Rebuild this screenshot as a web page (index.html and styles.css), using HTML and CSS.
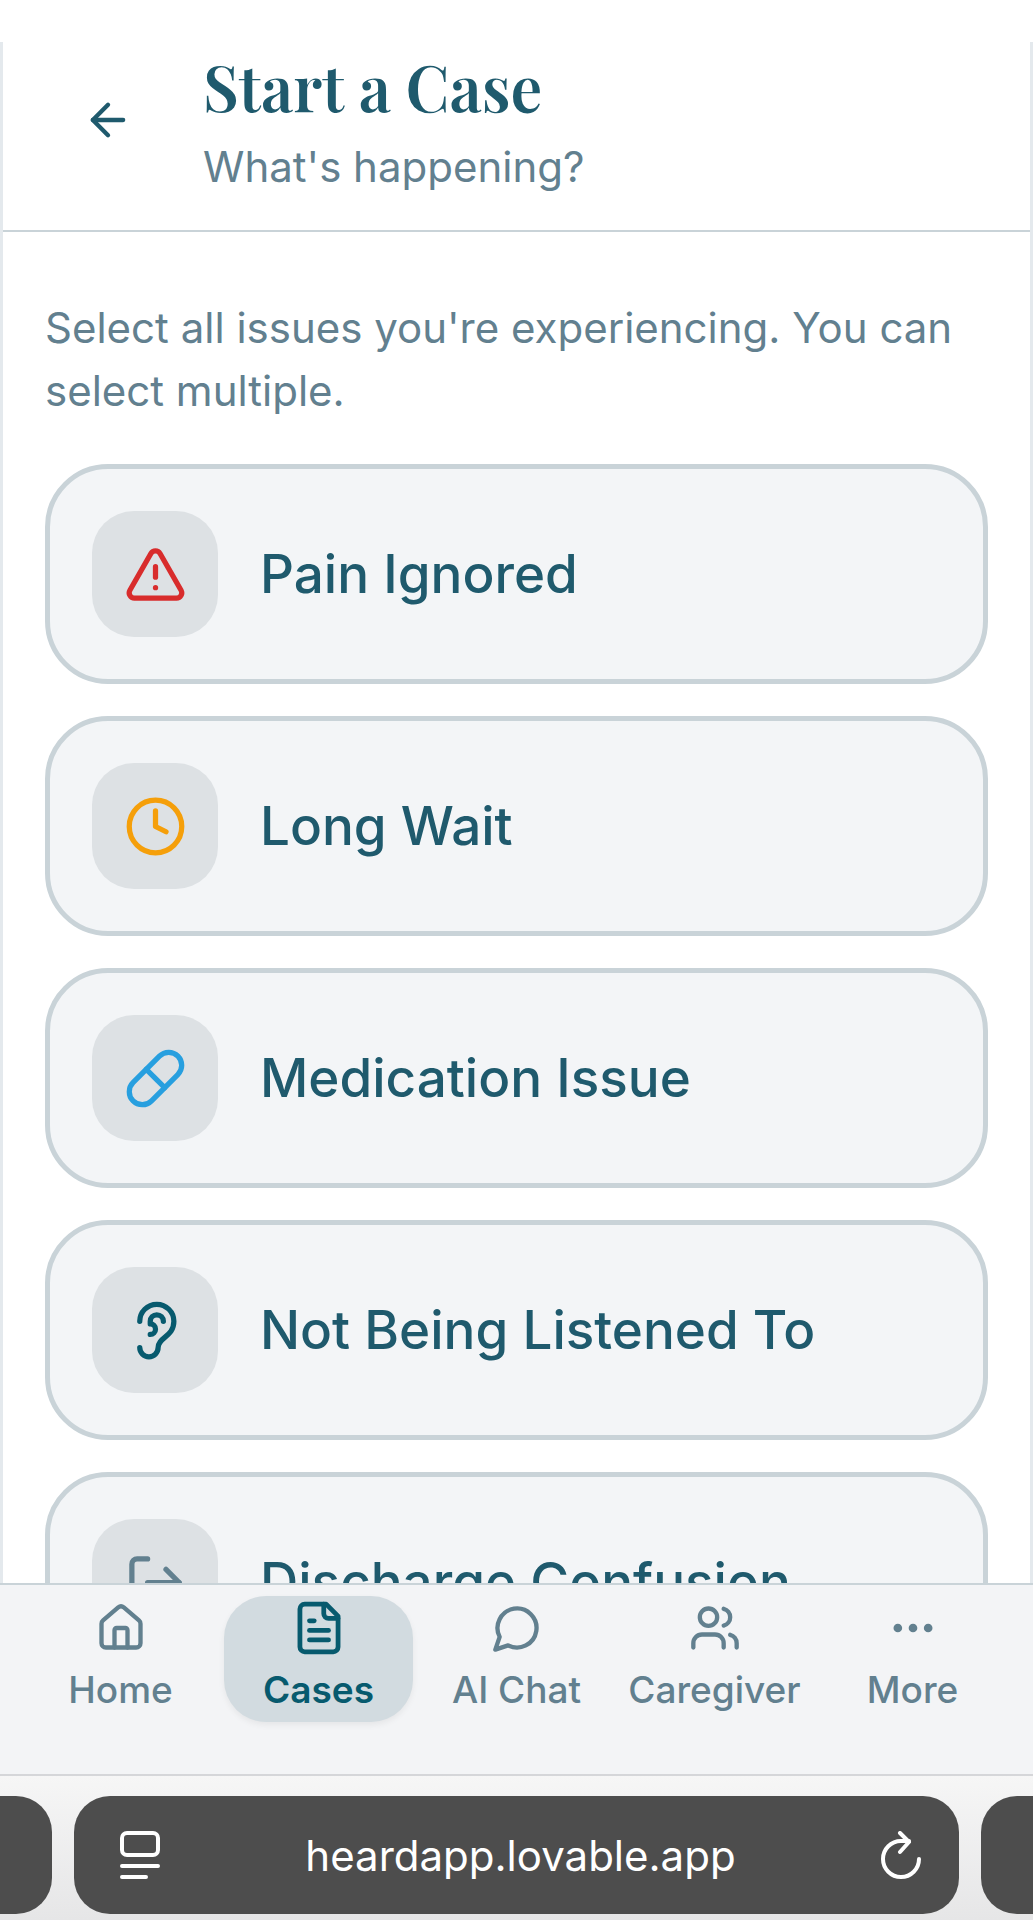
FILE: index.html
```html
<!DOCTYPE html>
<html lang="en">

<head>
  <meta charset="UTF-8">
  <meta name="viewport" content="width=device-width, initial-scale=1.0">
  <title>Start a Case</title>
  <link rel="stylesheet" href="styles.css">
</head>

<body>
  <div class="app">
    <header class="page-header">
      <button class="back-btn" type="button" aria-label="Back">
        <svg class="icon" viewBox="0 0 24 24"><path d="m12 19-7-7 7-7"/><path d="M19 12H5"/></svg>
      </button>
      <div>
        <h1>Start a Case</h1>
        <p class="subtitle">What's happening?</p>
      </div>
    </header>

    <main>
      <p class="intro">Select all issues you're experiencing. You can select multiple.</p>
      <div class="issue-list">
        <button class="issue" type="button" aria-pressed="false">
          <span class="issue-icon red">
            <svg class="icon" viewBox="0 0 24 24"><path d="m21.73 18-8-14a2 2 0 0 0-3.48 0l-8 14A2 2 0 0 0 4 21h16a2 2 0 0 0 1.73-3"/><path d="M12 9v4"/><path d="M12 17h.01"/></svg>
          </span>
          Pain Ignored
        </button>
        <button class="issue" type="button" aria-pressed="false">
          <span class="issue-icon orange">
            <svg class="icon" viewBox="0 0 24 24"><circle cx="12" cy="12" r="10"/><path d="M12 6v6l4 2"/></svg>
          </span>
          Long Wait
        </button>
        <button class="issue" type="button" aria-pressed="false">
          <span class="issue-icon blue">
            <svg class="icon" viewBox="0 0 24 24"><path d="m10.5 20.5 10-10a4.95 4.95 0 1 0-7-7l-10 10a4.95 4.95 0 1 0 7 7Z"/><path d="m8.5 8.5 7 7"/></svg>
          </span>
          Medication Issue
        </button>
        <button class="issue" type="button" aria-pressed="false">
          <span class="issue-icon teal">
            <svg class="icon" viewBox="0 0 24 24"><path d="M6 8.5a6.5 6.5 0 1 1 13 0c0 6-6 6-6 10a3.5 3.5 0 1 1-7 0"/><path d="M15 8.5a2.5 2.5 0 0 0-5 0v1a2 2 0 1 1 0 4"/></svg>
          </span>
          Not Being Listened To
        </button>
        <button class="issue" type="button" aria-pressed="false">
          <span class="issue-icon slate">
            <svg class="icon" viewBox="0 0 24 24"><path d="M9 21H5a2 2 0 0 1-2-2V5a2 2 0 0 1 2-2h4"/><path d="m16 17 5-5-5-5"/><path d="M21 12H9"/></svg>
          </span>
          Discharge Confusion
        </button>
      </div>
    </main>
  </div>

  <nav class="tabs">
    <a class="tab" href="#home">
      <svg class="icon" viewBox="0 0 24 24"><path d="M15 21v-8a1 1 0 0 0-1-1h-4a1 1 0 0 0-1 1v8"/><path d="M3 10a2 2 0 0 1 .709-1.528l7-5.999a2 2 0 0 1 2.582 0l7 5.999A2 2 0 0 1 21 10v9a2 2 0 0 1-2 2H5a2 2 0 0 1-2-2z"/></svg>
      Home
    </a>
    <a class="tab active" href="#cases" aria-current="page">
      <svg class="icon" viewBox="0 0 24 24"><path d="M15 2H6a2 2 0 0 0-2 2v16a2 2 0 0 0 2 2h12a2 2 0 0 0 2-2V7Z"/><path d="M14 2v4a2 2 0 0 0 2 2h4"/><path d="M10 9H8"/><path d="M16 13H8"/><path d="M16 17H8"/></svg>
      Cases
    </a>
    <a class="tab" href="#chat">
      <svg class="icon" viewBox="0 0 24 24"><path d="M7.9 20A9 9 0 1 0 4 16.1L2 22Z"/></svg>
      AI Chat
    </a>
    <a class="tab" href="#caregiver">
      <svg class="icon" viewBox="0 0 24 24"><path d="M16 21v-2a4 4 0 0 0-4-4H6a4 4 0 0 0-4 4v2"/><circle cx="9" cy="7" r="4"/><path d="M22 21v-2a4 4 0 0 0-3-3.87"/><path d="M16 3.13a4 4 0 0 1 0 7.75"/></svg>
      Caregiver
    </a>
    <a class="tab" href="#more">
      <svg class="icon" viewBox="0 0 24 24"><circle cx="12" cy="12" r="1"/><circle cx="19" cy="12" r="1"/><circle cx="5" cy="12" r="1"/></svg>
      More
    </a>
  </nav>

  <!-- Browser toolbar -->
  <div class="browser-bar">
    <div class="side-tab left"></div>
    <div class="address">
      <button type="button" aria-label="Page settings">
        <svg viewBox="0 0 40 48"><rect x="2" y="2" width="36" height="22" rx="5"/><path d="M2 35h36M2 46h24"/></svg>
      </button>
      <input type="text" value="heardapp.lovable.app" aria-label="Address">
      <button type="button" aria-label="Reload">
        <svg viewBox="0 0 40 48"><path d="M38 28a18 18 0 1 1-18-18h8"/><path d="m19 2 9 9-9 10"/></svg>
      </button>
    </div>
    <div class="side-tab right"></div>
  </div>
</body>

</html>
```

FILE: styles.css
```css
* {
  box-sizing: border-box;
}

body {
  display: flex;
  flex-direction: column;
  height: 100vh;
  margin: 0;
  padding-top: 42px;
  background: #fff;
  color: #1f5a6d;
  font-family: Inter, "Liberation Sans", sans-serif;
  font-size: 42px;
  line-height: 63px;
}

h1,
p {
  margin: 0;
}

button,
input {
  font: inherit;
  color: inherit;
  border: 0;
  padding: 0;
  background: none;
}

.icon {
  width: 52px;
  height: 52px;
  flex: none;
}

svg {
  display: block;
  fill: none;
  stroke: currentColor;
  stroke-width: 2;
  stroke-linecap: round;
  stroke-linejoin: round;
}

/* Page */
.app {
  flex: 1;
  min-height: 0;
  overflow-y: auto;
  scrollbar-width: none;
  border: solid #e4e9ed;
  border-width: 0 3px;
}

.page-header {
  display: flex;
  align-items: center;
  gap: 32px;
  padding: 0 42px 32px;
  border-bottom: 2px solid #c9d3d8;
}

.back-btn {
  display: flex;
  align-items: center;
  justify-content: center;
  width: 126px;
  height: 126px;
}

h1 {
  margin-bottom: 5px;
  font-family: "Playfair Display", "Liberation Serif", serif;
  font-size: 63px;
  font-weight: 600;
  line-height: 88px;
}

.subtitle,
.intro {
  color: #62808f;
}

main {
  padding: 64px 42px;
}

.issue-list {
  display: flex;
  flex-direction: column;
  gap: 32px;
  margin-top: 42px;
}

.issue {
  display: flex;
  align-items: center;
  gap: 42px;
  padding: 42px;
  border: 5px solid #c9d3d8;
  border-radius: 63px;
  background: #f3f5f7;
  font-size: 53px;
  font-weight: 500;
  text-align: left;
}

.issue-icon {
  display: flex;
  align-items: center;
  justify-content: center;
  width: 126px;
  height: 126px;
  border-radius: 42px;
  background: #dde1e4;
}

.issue-icon .icon {
  width: 63px;
  height: 63px;
}

.red {
  color: #d82c2c;
}

.orange {
  color: #f59f0a;
}

.blue {
  color: #279fdf;
}

.teal {
  color: #075a6e;
}

.slate {
  color: #62808f;
}

/* Bottom navigation */
.tabs {
  display: grid;
  grid-template-columns: repeat(5, minmax(0, 1fr));
  gap: 9px;
  padding: 11px 26px 52px;
  border-top: 2px solid #c9d3d8;
  background: #f3f4f6;
}

.tab {
  display: flex;
  flex-direction: column;
  align-items: center;
  justify-content: center;
  gap: 10px;
  height: 126px;
  border-radius: 42px;
  color: #62808f;
  font-size: 37px;
  font-weight: 500;
  line-height: 52px;
  text-decoration: none;
  white-space: nowrap;
}

.tab.active {
  background: #d2dbe0;
  box-shadow: 0 3px 6px rgba(0, 0, 0, 0.06);
  color: #075a6e;
  font-weight: 600;
}

.tab.active .icon {
  transform: scale(1.1);
}

/* Browser toolbar */
.browser-bar {
  display: flex;
  gap: 22px;
  padding: 20px 0 6px;
  border-top: 2px solid #d5d6d9;
  background: linear-gradient(#f6f6f6, #e6e6e7);
}

.side-tab {
  width: 52px;
  background: #4d4d4d;
}

.side-tab.left {
  border-radius: 0 36px 36px 0;
}

.side-tab.right {
  border-radius: 36px 0 0 36px;
}

.address {
  display: flex;
  align-items: center;
  flex: 1;
  min-width: 0;
  height: 118px;
  padding: 0 38px 0 46px;
  border-radius: 36px;
  background: #4d4d4d;
  color: #fff;
}

.address input {
  flex: 1;
  min-width: 0;
  font-size: 42px;
  text-align: center;
}

.address svg {
  width: 40px;
  height: 48px;
  stroke-width: 4;
}
```
